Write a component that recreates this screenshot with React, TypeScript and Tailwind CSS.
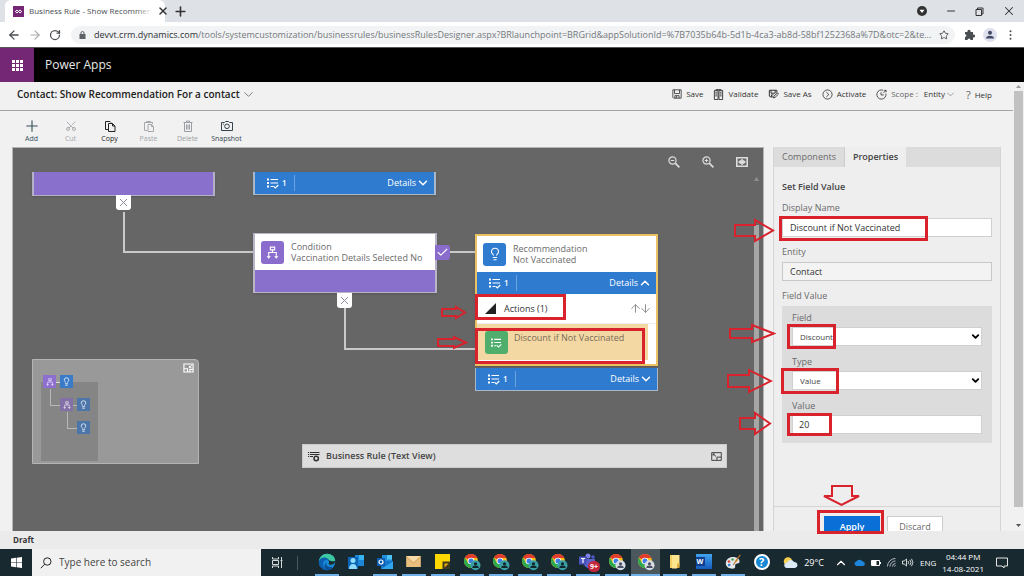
import { ReactNode, useState } from "react";
import {
  ArrowDown,
  ArrowLeft,
  ArrowRight,
  ArrowUp,
  Check,
  ChevronDown,
  ChevronUp,
  Lightbulb,
  Minus,
  Plus,
  RotateCw,
  Scissors,
  Star,
  X,
} from "lucide-react";

interface IconProps {
  className?: string;
}

interface BoxProps {
  className: string;
}

interface ArrowProps {
  className: string;
  w: number;
  h: number;
  head: number;
}

const URL_HOST = "devvt.crm.dynamics.com";
const URL_PATH =
  "/tools/systemcustomization/businessrules/businessRulesDesigner.aspx?BRlaunchpoint=BRGrid&appSolutionId=%7B7035b64b-5d1b-4ca3-ab8d-58bf1252368a%7D&otc=2&te...";

/* ---------- icons ---------- */

const ListCheckIcon = ({ className }: IconProps) => (
  <svg className={className} viewBox="0 0 12 11" fill="none" stroke="currentColor">
    <path d="M0 1.500h2M0 5h2M0 8.500h2" strokeWidth="2" />
    <path d="M3.500 1.500h7.500M3.500 5h7.500M3.500 8.500h2.500" strokeWidth="1.200" />
    <path d="M6.500 8.200l1.800 1.800 3-3" strokeWidth="1.200" />
  </svg>
);

const ConditionIcon = ({ className }: IconProps) => (
  <svg className={className} viewBox="0 0 12 12" fill="none" stroke="currentColor">
    <path d="M4 1h4v2.600H4zM6 3.600V6M2.500 9V6h7v3" />
    <path d="M1 9.500h3L2.500 11.500zM8 9.500h3L9.500 11.500z" fill="currentColor" strokeWidth=".5" />
  </svg>
);

const FloppyIcon = ({ className }: IconProps) => (
  <svg className={className} viewBox="0 0 12 12" fill="none" stroke="currentColor">
    <path d="M1 1h10v10H2l-1-1zM3 1v4.500h6V1M3.500 11V8h5v3M5.500 8.500V11" />
  </svg>
);

const FloppyPenIcon = ({ className }: IconProps) => (
  <svg className={className} viewBox="0 0 13 12" fill="none" stroke="currentColor">
    <path d="M6 9.500H2.500l-1-1v-7h9v3M3.500 1.500v3.500h5V1.500M4 9.500V7h2.500" strokeWidth="1.200" />
    <path d="M6.500 10.800l.6-2.200 4-4 1.400 1.400-4 4z" strokeWidth="1.100" />
  </svg>
);

const ValidateIcon = ({ className }: IconProps) => (
  <svg className={className} viewBox="0 0 12 12" fill="none" stroke="currentColor">
    <path d="M1.500 1.500h4v10h-4zM6.500 1.500h4v10h-4z" />
    <path d="M2.500 3.500h2M2.500 5.500h2M2.500 7.500h2M7.500 3.500h2M7.500 5.500h2M7.500 7.500h2M3 .7h6" />
  </svg>
);

const ActivateIcon = ({ className }: IconProps) => (
  <svg className={className} viewBox="0 0 12 12" fill="none" stroke="currentColor" strokeWidth=".9">
    <circle cx="6" cy="6" r="5" />
    <path d="M4.800 3.500L7.500 6 4.800 8.500" />
  </svg>
);

const ScopeIcon = ({ className }: IconProps) => (
  <svg className={className} viewBox="0 0 12 12" fill="none" stroke="currentColor" strokeWidth=".9">
    <path d="M8 1.500A5 5 0 1 0 10.800 5" />
    <path d="M5.500 3.500v3h3M8 4.200l3-2.700M9 1.500h2v2" />
  </svg>
);

const CopyIcon = ({ className }: IconProps) => (
  <svg className={className} viewBox="0 0 12 12" fill="none" stroke="currentColor">
    <path d="M4 9.500H1.500v-8H6l1 1" />
    <path d="M4.500 3.500h4l2.500 2.500v5.500H4.500zM8.500 3.500V6H11" />
  </svg>
);

const PasteIcon = ({ className }: IconProps) => (
  <svg className={className} viewBox="0 0 12 12" fill="none" stroke="currentColor">
    <path d="M4 10.500H1.500v-8h8V4M3.500 2.500v-1h4v1" />
    <path d="M5 4.500h3.500l2 2v5H5zM8.500 4.500v2h2" />
  </svg>
);

const BinIcon = ({ className }: IconProps) => (
  <svg className={className} viewBox="0 0 12 12" fill="none" stroke="currentColor">
    <path d="M1.500 2.500h9M4.500 2.500v-1.500h3v1.500M2.500 2.500v9h7v-9M4.500 4.500v5M6 4.500v5M7.500 4.500v5" />
  </svg>
);

const SnapshotIcon = ({ className }: IconProps) => (
  <svg className={className} viewBox="0 0 12 12" fill="none" stroke="currentColor">
    <path d="M.5 2.500h3l1-1h3l1 1h3v8H.5z" />
    <circle cx="6" cy="6.300" r="2.300" />
    <path d="M1.800 4.200h1" />
  </svg>
);

const ZoomIcon = ({ className, plus }: IconProps & { plus?: boolean }) => (
  <svg className={className} viewBox="0 0 12 12" fill="none" stroke="currentColor">
    <circle cx="4.500" cy="4.500" r="3.600" strokeWidth="1.200" />
    <path d="M2.800 4.500h3.400" />
    {plus && <path d="M4.500 2.800v3.400" />}
    <path d="M7.200 7.200l4.200 4.200" strokeWidth="1.700" />
  </svg>
);

const FitIcon = ({ className }: IconProps) => (
  <svg className={className} viewBox="0 0 12 10" fill="none" stroke="currentColor">
    <path d="M.8.800h10.400v8.400H.8z" strokeWidth="1.600" />
    <path d="M4 3.200h4v3.600H4z" fill="currentColor" stroke="none" />
    <path d="M6 1.800L4.300 3.500h3.400zM6 8.200L4.300 6.500h3.400zM2 5l2-1.800v3.600zM10 5L8 3.200v3.600z" fill="currentColor" stroke="none" />
  </svg>
);

const CollapseIcon = ({ className }: IconProps) => (
  <svg className={className} viewBox="0 0 12 10" fill="none" stroke="currentColor">
    <path d="M1 .7h10v8.600H1zM1 5.800h4v3.500M7.500 9V6.500H11" strokeWidth="1.200" />
    <path d="M10 1.500L7 4.500M7 2.300v2.200h2.200" />
  </svg>
);

const ExpandIcon = ({ className }: IconProps) => (
  <svg className={className} viewBox="0 0 12 10" fill="none" stroke="currentColor">
    <path d="M.7 .7h10.600v8.600H.7zM6.500 9V5.700H11" />
    <path d="M5.500 5L2.200 2.200M2.200 4V2.200H4" />
  </svg>
);

const TextViewIcon = ({ className }: IconProps) => (
  <svg className={className} viewBox="0 0 12 11" fill="none" stroke="currentColor">
    <path d="M0 1.500h1.200M2 1.500h9.500M0 3.500h1.200M2 3.500h9.500M0 5.500h1.200M2 5.500h3" />
    <circle cx="8.200" cy="7.500" r="2.200" strokeWidth="1.500" />
  </svg>
);

const EdgeLogo = () => (
  <svg className="size-[18px]" viewBox="0 0 18 18">
    <circle cx="9" cy="9" r="8.200" fill="#1789d8" />
    <path d="M.9 8.500C1.500 3.800 5 .8 9.200.8c4.500 0 8 3 8 6.900 0 2.600-2.200 4.100-4.300 4.100-1.600 0-2.600-.6-2.300-1.300.9-1 .9-4.300-2.800-4.600C4.500 5.700 1.800 7 .9 8.500z" fill="#3cc8a0" />
    <path d="M.9 8.500C1.800 5.500 5 4 7.900 4.800c2.200.6 3.500 2.200 3.300 4-.9-2.100-4-2.500-5.500-.3C3.800 11.500 6 16 9.800 17.200 4.500 17.500.7 13.500.9 8.500z" fill="#0c5eae" />
    <path d="M8.200 9.500c-.8 2.800 1.900 5.300 6.300 4.400-1.500 2-3.200 3.200-5.100 3.200-3-1-4-5-1.200-7.600z" fill="#0b4f96" />
    <path d="M10.600 10.500c.9-1 .7-2.500-.4-3.200 3 .2 3.300 2 7 .4 0 2.600-2.200 4.100-4.300 4.100-1.600 0-2.600-.6-2.300-1.300z" fill="#182930" />
  </svg>
);

const PeopleLogo = () => (
  <svg className="size-4" viewBox="0 0 16 16">
    <path d="M7 1h9v11H7z" fill="#1b87d6" />
    <path d="M11 1h5v5h-5z" fill="#37b4f2" />
    <path d="M0 3h10v12H0z" fill="#0c64b4" />
    <circle cx="5" cy="6.500" r="2.500" fill="#8fdcff" />
    <path d="M1 15c0-3 1.500-5 4-5s4 2 4 5z" fill="#8fdcff" />
  </svg>
);

const OutlookLogo = () => (
  <svg className="size-4" viewBox="0 0 16 16">
    <path d="M5 1h10v9H5z" fill="#1f8ede" />
    <path d="M10 1h5v4.500h-5z" fill="#4fc3f5" />
    <path d="M4 7l12 0v8H4z" fill="#1575c8" />
    <path d="M4 15L16 7.500V15z" fill="#30a5ee" />
    <path d="M0 4h8v8H0z" fill="#0b5cb0" />
    <circle cx="4" cy="8" r="2" fill="none" stroke="#fff" strokeWidth="1.200" />
  </svg>
);

const MailLogo = () => (
  <svg className="h-[11px] w-[15px]" viewBox="0 0 16 12">
    <path d="M0 0h16v12H0z" fill="#e9bd7d" />
    <path d="M0 0l8 7 8-7z" fill="#f6d9a6" />
    <path d="M0 .5l8 7 8-7" fill="none" stroke="#c8924f" strokeWidth=".8" />
  </svg>
);

const StickyLogo = () => (
  <svg className="size-[15px]" viewBox="0 0 15 15">
    <path d="M0 0h15v15H0z" fill="#ffd800" />
    <path d="M7.500 7.500H15V15H7.500z" fill="#3d3a22" />
    <path d="M9.500 13.500V9.500h4z" fill="#f0b400" />
  </svg>
);

const ChromeLogo = ({ light }: { light?: boolean }) => (
  <svg className="size-[18px]" viewBox="0 0 18 18">
    <circle cx="8" cy="8" r="7" fill="#fbc116" />
    <path d="M8 8L1.940 4.500A7 7 0 0 1 14.060 4.500L14.300 5H8z" fill="#e33b2e" />
    <path d="M8 8l-3 2L1.940 4.500A7 7 0 0 0 8 15l2.600-4.500z" fill="#2da94f" />
    <circle cx="8" cy="8" r="3.300" fill="#fff" />
    <circle cx="8" cy="8" r="2.500" fill="#3f7de8" />
    <circle cx="12.500" cy="12.300" r="5" fill={light ? "#d9dde4" : "#3a9fa4"} />
    <circle cx="12.500" cy="10.800" r="1.600" fill={light ? "#4a5164" : "#11262d"} />
    <path d="M9.300 15c0-1.700 1.300-2.400 3.200-2.400s3.200.7 3.200 2.400z" fill={light ? "#4a5164" : "#11262d"} />
  </svg>
);

const FolderLogo = () => (
  <svg className="h-[15px] w-3" viewBox="0 0 12 15">
    <path d="M1 1h7v13H1z" fill="#f4cf67" />
    <path d="M3 1h7.500v11H8v2.500H3z" fill="#fde48f" />
    <path d="M8 9.500h2.500V14H8z" fill="#dcae3f" />
  </svg>
);

const PaintLogo = () => (
  <svg className="size-4" viewBox="0 0 16 16">
    <path d="M8 3c4 0 7 2.200 6.500 5-.4 2-3 1.200-4 2.200-1 1 .5 2.500-.8 3.800C8 15.500.8 14.500.8 9.500.8 5.500 4 3 8 3z" fill="#e3e8ec" />
    <circle cx="4" cy="7.500" r="1.300" fill="#d9453b" />
    <circle cx="7.500" cy="5.500" r="1.200" fill="#3f9f4b" />
    <circle cx="4.200" cy="11" r="1.300" fill="#2d7fd6" />
    <circle cx="11.500" cy="6.500" r="1.200" fill="#e9a82d" />
    <path d="M14.800.5L8.500 9.500l-1 2 1.800-1.300L15.700 1.300z" fill="#b87333" />
  </svg>
);

/* ---------- red call-outs ---------- */

const RedBox = ({ className }: BoxProps) => (
  <div className={`pointer-events-none absolute z-20 border-[3px] border-[#d8222c] ${className}`} />
);

// block arrow, pointing to the right
const RedArrow = ({ className, w, h, head }: ArrowProps) => {
  const neck = w - head;
  const top = Math.round(h * 0.27);
  const points = `1,${top} ${neck},${top} ${neck},2 ${w - 2},${h / 2} ${neck},${h - 2} ${neck},${h - top} 1,${h - top}`;
  return (
    <svg className={`pointer-events-none absolute z-20 ${className}`} width={w} height={h} fill="none">
      <polygon points={points} stroke="#d8222c" strokeWidth="2" />
    </svg>
  );
};

/* ---------- browser ---------- */

const BrowserChrome = () => (
  <header className="shrink-0">
    <div className="flex h-[22px] items-center bg-[#dee1e6] pl-[5px]">
      <div className="flex h-full w-40 items-center gap-[5px] rounded-t-md bg-white pr-1 pl-2">
        <svg className="size-[11px] shrink-0" viewBox="0 0 11 11" fill="none">
          <path d="M0 0h11v11H0z" fill="#742774" />
          <path d="M5.500 5.500L4 4 2.300 5.500 4 7l3-3 1.700 1.500L7 7z" stroke="#fff" />
        </svg>
        <div className="relative flex-1 text-[8px] leading-4 whitespace-nowrap text-[#4a4d52]">
          <span>Business Rule - Show Recommen</span>
          <span className="absolute inset-y-0 right-0 w-4 bg-linear-to-r from-transparent to-white" />
        </div>
        <button aria-label="Close tab"><X className="size-3 text-[#333]" strokeWidth={3} /></button>
      </div>
      <button className="ml-2" aria-label="New tab"><Plus className="size-[15px] text-[#333]" strokeWidth={2.500} /></button>
      <div className="ml-auto flex items-center gap-[18px] pr-2 text-[#333]">
        <svg className="size-2.5" viewBox="0 0 10 10">
          <circle cx="5" cy="5" r="5" fill="#333" />
          <path d="M2.500 3.800h5L5 7z" fill="#fff" />
        </svg>
        <button aria-label="Minimize"><Minus className="size-3" strokeWidth={2} /></button>
        <button aria-label="Restore">
          <svg className="size-[9px]" viewBox="0 0 9 9" fill="none" stroke="currentColor">
            <path d="M1 2.500h5.500v6H1zM2.500 2.500V1H8v6H6.500" />
          </svg>
        </button>
        <button aria-label="Close"><X className="size-[14px]" strokeWidth={1.800} /></button>
      </div>
    </div>
    <div className="flex h-[25px] items-center bg-white pl-[7px]">
      <div className="flex items-center gap-[7px] text-[#4a4d52]">
        <button aria-label="Back"><ArrowLeft className="size-[14px]" strokeWidth={2.200} /></button>
        <button aria-label="Forward"><ArrowRight className="size-[14px] text-[#aaa]" strokeWidth={2} /></button>
        <button aria-label="Reload"><RotateCw className="size-3" strokeWidth={2.500} /></button>
      </div>
      <div className="ml-[10px] flex h-[18px] min-w-0 flex-1 items-center rounded-full bg-[#f1f3f4] pr-[6px] pl-2">
        <svg className="h-2 w-[7px] shrink-0" viewBox="0 0 7 8">
          <path d="M.5 3h6v5h-6z" fill="#5f6368" />
          <path d="M2 3.500V2a1.500 1.500 0 0 1 3 0v1.500" fill="none" stroke="#5f6368" />
        </svg>
        <div className="ml-2 min-w-0 flex-1 overflow-hidden text-[9px] leading-4 whitespace-nowrap text-[#75787c]">
          <span className="text-[#303134]">{URL_HOST}</span>{URL_PATH}
        </div>
        <Star className="size-[10px] shrink-0 text-[#4a4d52]" strokeWidth={2.200} />
      </div>
      <div className="flex items-center gap-2 pr-2 pl-[9px]">
        <svg className="size-[11px]" viewBox="0 0 11 11" fill="#4a4d52">
          <path d="M1 3h2.500a1.600 1.600 0 1 1 3 0H9v2.500a1.600 1.600 0 1 1 0 3V11H6.500a1.500 1.500 0 0 0-3 0H1V8a1.400 1.400 0 0 0 0-2.800z" />
        </svg>
        <svg className="size-[14px]" viewBox="0 0 14 14">
          <circle cx="7" cy="7" r="7" fill="#dfe1ee" />
          <circle cx="7" cy="4.800" r="2" fill="#434a66" />
          <path d="M3 10.500c0-2 1.500-2.800 4-2.800s4 .8 4 2.800z" fill="#434a66" />
        </svg>
        <svg className="h-2.5 w-[11px]" viewBox="0 0 11 10" fill="#4a4d52">
          <circle cx="5.500" cy="1.300" r="1" /><circle cx="5.500" cy="5" r="1" /><circle cx="5.500" cy="8.700" r="1" />
        </svg>
      </div>
    </div>
  </header>
);

const AppHeader = () => (
  <div className="flex h-[35px] shrink-0 items-center border-t border-[#555] bg-black">
    <button className="flex h-full w-[34px] items-center justify-center bg-[#742774]" aria-label="App launcher">
      <svg className="size-[11px]" viewBox="0 0 11 11" fill="#fff">
        {[0, 4, 8].map((y) => [0, 4, 8].map((x) => <rect key={`${x}-${y}`} x={x} y={y} width="3" height="3" />))}
      </svg>
    </button>
    <span className="pl-[11px] text-[12px] text-[#e8e8e8]">Power Apps</span>
  </div>
);

/* ---------- command bars ---------- */

const Command = ({ icon, children }: { icon: ReactNode; children: ReactNode }) => (
  <button className="flex items-center gap-1 whitespace-nowrap">
    {icon}
    {children}
  </button>
);

const CommandBar = () => (
  <div className="flex h-[29px] shrink-0 items-center justify-between border-b border-[#a5a5a5] pr-[21px] pb-1 pl-[17px]">
    <button className="flex items-center gap-px text-[10px] font-semibold whitespace-nowrap text-[#222]">
      Contact: Show Recommendation For a contact
      <ChevronDown className="size-[15px] text-[#777]" strokeWidth={1.500} />
    </button>
    <div className="flex items-center gap-2.5 text-[8px] text-[#333]">
      <Command icon={<FloppyIcon className="size-2.5" />}>Save</Command>
      <Command icon={<ValidateIcon className="size-[11px]" />}>Validate</Command>
      <Command icon={<FloppyPenIcon className="h-2.5 w-[11px]" />}>Save As</Command>
      <Command icon={<ActivateIcon className="size-[11px]" />}>Activate</Command>
      <div className="flex items-center gap-1 whitespace-nowrap">
        <ScopeIcon className="size-[11px]" />
        <span className="text-[#666]">Scope :</span>
        <button className="ml-0.5 flex items-center">
          Entity <ChevronDown className="size-[11px] text-[#777]" strokeWidth={1.500} />
        </button>
      </div>
      <button className="flex items-center gap-1 pt-0.5"><span className="text-[11px] leading-3 text-[#666]">?</span>Help</button>
    </div>
  </div>
);

const tools = [
  { name: "Add", color: "text-[#34505c]", icon: <Plus className="size-[18px]" strokeWidth={1.500} /> },
  { name: "Cut", color: "text-[#a4a7ac]", icon: <Scissors className="size-3 -rotate-90" strokeWidth={1.800} /> },
  { name: "Copy", color: "text-[#222]", icon: <CopyIcon className="size-3" /> },
  { name: "Paste", color: "text-[#a4a7ac]", icon: <PasteIcon className="size-3" /> },
  { name: "Delete", color: "text-[#9a9da2]", icon: <BinIcon className="size-3" /> },
  { name: "Snapshot", color: "text-[#34454f]", icon: <SnapshotIcon className="size-3" /> },
];

const Toolbar = () => (
  <div className="flex h-9 shrink-0 pt-[7px] pl-3">
    {tools.map((tool) => (
      <button key={tool.name} className={`flex w-[39px] flex-col items-center text-[7px] leading-3 ${tool.color}`}>
        <span className="flex h-[15px] items-center">{tool.icon}</span>
        {tool.name}
      </button>
    ))}
  </div>
);

/* ---------- designer canvas ---------- */

const DetailsBar = ({ open }: { open?: boolean }) => (
  <div className="flex h-[22px] items-center bg-[#2f7bd0] pr-1 pl-3 text-white">
    <ListCheckIcon className="h-[11px] w-3" />
    <span className="ml-[3px] text-[8px] font-semibold">1</span>
    <span className="ml-[7px] h-4 w-px bg-[#6ba3e0]" />
    <button className="ml-auto flex items-center text-[9px]">
      Details
      {open ? <ChevronUp className="size-[14px]" strokeWidth={2.500} /> : <ChevronDown className="size-[14px]" strokeWidth={2.500} />}
    </button>
  </div>
);

const NodeHead = ({ color, icon, type, name }: { color: string; icon: ReactNode; type: string; name: string }) => (
  <div className="flex h-9 items-center gap-[7px] bg-white pl-[6px]">
    <span className={`flex size-[23px] items-center justify-center rounded-[3px] text-white ${color}`}>{icon}</span>
    <div className="text-[9px] leading-[11px] whitespace-nowrap text-[#6b6b6b]">
      <p>{type}</p>
      <p>{name}</p>
    </div>
  </div>
);

const NoBadge = ({ className }: BoxProps) => (
  <span className={`absolute flex size-[15px] items-center justify-center rounded-b-[3px] bg-white ${className}`}>
    <X className="size-[13px] text-[#8b8b9b]" strokeWidth={1.800} />
  </span>
);

const MapTile = ({ className, rule }: BoxProps & { rule?: boolean }) => (
  <span className={`absolute flex size-[13px] items-center justify-center text-white/80 ${className}`}>
    {rule ? <ConditionIcon className="size-2" /> : <Lightbulb className="size-[9px]" strokeWidth={2.500} />}
  </span>
);

const MiniMap = () => (
  <div className="absolute top-[211px] left-[19px] h-[105px] w-[167px] rounded-tr border border-[#b4b4b4] bg-[#999]">
    <div className="absolute top-[22px] left-2 h-[79px] w-[57px] bg-[#858585]" />
    <div className="absolute top-[22px] left-[23px] h-px w-[6px] bg-[#ddd]" />
    <div className="absolute top-[29px] left-[17px] h-[17px] w-[11px] border-b border-l border-[#b8b8b8]" />
    <div className="absolute top-[45px] left-[40px] h-px w-[6px] bg-[#b8b8b8]" />
    <div className="absolute top-[52px] left-[34px] h-[17px] w-[11px] border-b border-l border-[#b8b8b8]" />
    <MapTile className="top-[15px] left-[10px] bg-[#8d6fcf]" rule />
    <MapTile className="top-[15px] left-[27px] bg-[#3a7ac6]" />
    <MapTile className="top-[38px] left-[27px] bg-[#8370a6]" rule />
    <MapTile className="top-[38px] left-[44px] bg-[#4c76aa]" />
    <MapTile className="top-[61px] left-[44px] bg-[#4c76aa]" />
    <button className="absolute top-[3px] right-1 text-white" aria-label="Collapse map">
      <CollapseIcon className="h-[10px] w-[11px]" />
    </button>
  </div>
);

const Canvas = () => (
  <section className="relative min-w-0 flex-1 overflow-hidden border border-b-0 border-[#b5b5b5] bg-[#666]">
    {/* connectors */}
    <div className="absolute top-16 left-[110px] h-[41px] w-[131px] border-b-2 border-l-2 border-[#c9c9c9]" />
    <div className="absolute top-[103px] left-[436px] h-0.5 w-[27px] bg-[#c9c9c9]" />
    <div className="absolute top-[160px] left-[331px] h-[42px] w-[132px] border-b-2 border-l-2 border-[#c9c9c9]" />

    <div className="absolute top-6 left-[19px] h-6 w-[183px] border-x-2 border-b border-[#b4b0c6] bg-[#8a70cd] shadow-sm" />
    <NoBadge className="top-[47px] left-[103px]" />

    <div className="absolute top-6 left-[240px] w-[183px] border-x-2 border-b border-[#a9b8c9] shadow-sm">
      <DetailsBar />
    </div>

    <div className="absolute top-[85px] left-[240px] w-[184px] border-x-2 border-y border-[#b9b5c6] shadow-sm">
      <NodeHead color="bg-[#8a6ccd]" icon={<ConditionIcon className="size-[13px]" />} type="Condition" name="Vaccination Details Selected No" />
      <div className="h-[22px] bg-[#8a70cd]" />
    </div>
    <span className="absolute top-[97px] left-[422px] flex size-[15px] items-center justify-center rounded-r-[3px] bg-[#8a6ccd]">
      <Check className="size-[13px] text-white" strokeWidth={2} />
    </span>
    <NoBadge className="top-[145px] left-[324px]" />

    <div className="absolute top-[86px] left-[462px] w-[183px] border-2 border-[#ebc263] bg-white shadow-sm">
      <NodeHead color="bg-[#2f7bd0]" icon={<Lightbulb className="size-[14px]" strokeWidth={1.800} />} type="Recommendation" name="Not Vaccinated" />
      <DetailsBar open />
      <div className="flex h-[30px] items-center border-b border-[#eee] pr-1 pl-2 text-[9px] text-[#333]">
        <svg className="size-[11px]" viewBox="0 0 11 11"><path d="M0 11L11 0v11z" fill="#222" /></svg>
        <span className="ml-2">Actions (1)</span>
        <span className="ml-auto flex text-[#8c8c8c]">
          <ArrowUp className="-mr-[3px] size-[13px]" strokeWidth={1.800} />
          <ArrowDown className="size-[13px]" strokeWidth={1.800} />
        </span>
      </div>
      <div className="mr-2 mb-1 flex h-9 gap-[6px] bg-[#f4d8a3] pt-[7px] pl-2 text-[9px] whitespace-nowrap text-[#776c58]">
        <span className="flex size-[23px] items-center justify-center rounded-[3px] bg-[#4fae6b] text-white">
          <ListCheckIcon className="h-[10px] w-[11px]" />
        </span>
        <span className="leading-[14px]">Discount if Not Vaccinated</span>
      </div>
    </div>
    <div className="absolute top-[220px] left-[462px] w-[183px] border-x border-b border-[#a9b8c9]">
      <DetailsBar />
    </div>

    <RedBox className="top-[146px] left-[462px] h-[26px] w-[91px]" />
    <RedBox className="top-[180px] left-[462px] h-9 w-[170px]" />
    <RedArrow className="top-[157px] left-[428px]" w={26} h={15} head={11} />
    <RedArrow className="top-[187px] left-[424px]" w={31} h={15} head={14} />

    <MiniMap />

    <div className="absolute top-[296px] right-9 left-[289px] flex h-6 items-center border border-[#ccc] bg-[#dedede] pr-1 pl-[5px] text-[#333]">
      <TextViewIcon className="h-[11px] w-3" />
      <span className="ml-[6px] text-[9px] font-semibold text-[#444]">Business Rule (Text View)</span>
      <button className="ml-auto" aria-label="Expand text view"><ExpandIcon className="h-[9px] w-[11px]" /></button>
    </div>

    <div className="absolute top-2 right-[15px] flex items-center gap-[22px] text-[#ddd]">
      <button aria-label="Zoom out"><ZoomIcon className="size-3" /></button>
      <button aria-label="Zoom in"><ZoomIcon className="size-3" plus /></button>
      <button aria-label="Fit to canvas"><FitIcon className="h-[10px] w-3" /></button>
    </div>

    <div className="absolute top-[77px] right-1 bottom-0 w-[5px] bg-[#a6a6a6]" />
    <svg className="absolute top-[29px] right-1 h-1 w-[5px]" viewBox="0 0 5 4"><path d="M0 4l2.500-4L5 4z" fill="#8f8f8f" /></svg>
  </section>
);

/* ---------- properties ---------- */

const SelectField = ({ id, label, value }: { id: string; label: string; value: string }) => (
  <div className="h-11">
    <label htmlFor={id} className="block h-[15px] leading-3">{label}</label>
    <div className="relative">
      <select id={id} defaultValue={value} className="h-[19px] w-full appearance-none border border-[#d0d0d0] bg-white pl-[7px] text-[8px] text-[#444]">
        <option>{value}</option>
      </select>
      <ChevronDown className="pointer-events-none absolute top-1 right-px size-[11px] text-black" strokeWidth={4} />
    </div>
  </div>
);

const PropertiesPanel = () => {
  const [displayName, setDisplayName] = useState("Discount if Not Vaccinated");
  const [value, setValue] = useState("20");

  return (
    <aside className="relative ml-[9px] w-[228px] shrink-0">
      <div className="flex h-full flex-col overflow-hidden border-x border-[#d5d5d5] bg-[#eeeeee] text-[9px] text-[#6a6a6a]">
        <div className="flex h-5 shrink-0 bg-[#dcdcdc]">
          <button className="w-[71px] border-r border-[#ccc]">Components</button>
          <button className="w-[61px] bg-[#eeeeee] font-semibold text-[#444]">Properties</button>
        </div>
        <div className="min-h-0 flex-1 px-2">
          <h2 className="pt-[13px] pb-2 leading-[14px] font-semibold text-[#444]">Set Field Value</h2>
          <label htmlFor="display-name" className="block h-4 leading-3">Display Name</label>
          <input id="display-name" value={displayName} onChange={(e) => setDisplayName(e.target.value)}
            className="block h-[19px] w-full border border-[#d0d0d0] bg-white pl-[7px] text-[#333]" />
          <label htmlFor="entity" className="mt-[9px] block h-4 leading-3">Entity</label>
          <input id="entity" value="Contact" readOnly
            className="block h-[19px] w-full border border-[#c8c8c8] bg-[#f3f3f3] pl-[7px] text-[#333]" />
          <p className="mt-[9px] h-4 leading-3">Field Value</p>
          <div className="h-[137px] bg-[#dcdcdc] px-[10px] pt-[6px]">
            <SelectField id="field" label="Field" value="Discount" />
            <SelectField id="type" label="Type" value="Value" />
            <label htmlFor="value" className="block h-[15px] leading-3">Value</label>
            <input id="value" value={value} onChange={(e) => setValue(e.target.value)}
              className="block h-[19px] w-full border border-[#d0d0d0] bg-white pl-[6px] text-[#333]" />
          </div>
        </div>
        <div className="flex h-[25px] shrink-0 gap-[7px] overflow-hidden border-t border-[#d5d5d5] pt-[9px] pl-[50px]">
          <button className="h-[22px] w-14 shrink-0 bg-[#0a70d8] font-semibold text-white">Apply</button>
          <button className="h-[22px] w-14 shrink-0 border border-[#ccc] bg-white">Discard</button>
        </div>
      </div>

      <RedBox className="top-[69px] left-[6px] h-[25px] w-[149px]" />
      <RedBox className="top-[177px] left-[14px] h-[25px] w-[49px]" />
      <RedBox className="top-[221px] left-2 h-[26px] w-[58px]" />
      <RedBox className="top-[266px] left-[14px] h-[23px] w-[45px]" />
      <RedBox className="-bottom-[3px] left-11 h-6 w-[67px]" />
      <RedArrow className="top-[71px] -left-[39px]" w={41} h={25} head={20} />
      <RedArrow className="top-[176px] -left-[44px]" w={47} h={21} head={24} />
      <RedArrow className="top-[221px] -left-[46px]" w={46} h={26} head={24} />
      <RedArrow className="top-[264px] -left-[34px]" w={33} h={25} head={17} />
      <svg className="absolute bottom-6 left-12 z-20" width="41" height="23" fill="none">
        <path d="M11 2h20v10h7L20.500 21 3 12h8z" stroke="#d8222c" strokeWidth="2" />
      </svg>
    </aside>
  );
};

/* ---------- windows taskbar ---------- */

const apps: { name: string; icon: ReactNode; running?: boolean; active?: boolean }[] = [
  { name: "Edge", icon: <EdgeLogo />, running: true },
  { name: "People", icon: <PeopleLogo /> },
  { name: "Outlook", icon: <OutlookLogo />, running: true },
  { name: "Mail", icon: <MailLogo />, running: true },
  { name: "Sticky Notes", icon: <StickyLogo />, running: true },
  { name: "Chrome 1", icon: <ChromeLogo />, running: true },
  { name: "Chrome 2", icon: <ChromeLogo />, running: true },
  { name: "Chrome 3", icon: <ChromeLogo />, running: true },
  { name: "Chrome 4", icon: <ChromeLogo />, running: true },
  {
    name: "Teams",
    running: true,
    icon: (
      <span className="relative flex size-[17px]">
        <svg className="size-[17px]" viewBox="0 0 17 17">
          <circle cx="9" cy="3" r="2.500" fill="#7b83eb" />
          <circle cx="14" cy="4" r="1.800" fill="#5059c9" />
          <path d="M5 6h11v5c0 3-2 4-5.500 4S5 13 5 10z" fill="#5b62c8" />
          <path d="M0 3.500h8v8H0z" fill="#4b53bc" />
          <path d="M2 5.500h4M4 5.500v4.500" stroke="#fff" strokeWidth="1.200" />
        </svg>
        <span className="absolute -right-1 -bottom-0.5 flex h-[11px] w-3 items-center justify-center rounded-full bg-[#c4263c] text-[7px] leading-none font-bold text-white">9+</span>
      </span>
    ),
  },
  { name: "Chrome 5", icon: <ChromeLogo light />, running: true },
  { name: "Chrome 6", icon: <ChromeLogo light />, running: true, active: true },
  { name: "File Explorer", icon: <FolderLogo />, running: true },
  {
    name: "Word",
    running: true,
    icon: (
      <span className="flex h-[15px] w-4 items-center bg-linear-to-b from-[#41a5ee] to-[#185abd]">
        <span className="flex size-[9px] items-center justify-center bg-[#103f91] text-[7px] leading-none font-bold text-white">W</span>
      </span>
    ),
  },
  { name: "Paint", icon: <PaintLogo />, running: true },
  {
    name: "Get Help",
    icon: (
      <span className="flex size-4 items-center justify-center rounded-full border-2 border-white bg-[#1687d4] text-[11px] leading-none font-bold text-white">?</span>
    ),
  },
];

const Taskbar = () => (
  <footer className="flex h-[27px] shrink-0 items-stretch bg-[#182930] text-white">
    <button className="flex w-8 items-center justify-center" aria-label="Start">
      <svg className="size-[11px]" viewBox="0 0 11 11" fill="#fff">
        <path d="M0 1.500L5 .8v4.400H0zM5.600.7L11 0v5.200H5.600zM0 5.800h5v4.400l-5-.7zM5.600 5.800H11V11l-5.400-.7z" />
      </svg>
    </button>
    <label className="flex w-[229px] items-center gap-[7px] bg-[#f1f1f1] pl-2 text-[#333]">
      <svg className="size-3" viewBox="0 0 12 12" fill="none" stroke="#222">
        <circle cx="7.300" cy="4.500" r="3.700" />
        <path d="M4.600 7.300L.8 11.200" />
      </svg>
      <input type="search" aria-label="Search" placeholder="Type here to search" className="min-w-0 flex-1 bg-transparent text-[10px] placeholder:text-[#444]" />
    </label>
    <button className="flex w-8 items-center justify-center" aria-label="Task view">
      <svg className="size-[11px]" viewBox="0 0 11 11" fill="none" stroke="#d5d9db">
        <path d="M.5 0v2h6V0M.5 3.500h6v4h-6zM.5 11V9h6v2M9.500 0v11M8.500 3.500h2" />
      </svg>
    </button>
    <span className="mr-3.5 ml-1 flex items-center"><span className="h-3.5 w-px bg-[#4a575d]" /></span>
    {apps.map((app) => (
      <button key={app.name} aria-label={app.name}
        className={`flex w-[29px] shrink-0 flex-col items-center ${app.active ? "bg-[#4a585e]" : ""}`}>
        <span className="flex flex-1 items-center justify-center">{app.icon}</span>
        <span className={`h-0.5 ${app.active ? "w-full" : "w-6"} ${app.running ? "bg-[#6fb1e8]" : ""}`} />
      </button>
    ))}
    <div className="ml-auto flex items-center gap-1.5 pr-4 text-[8px] whitespace-nowrap">
      <svg className="h-3 w-[15px]" viewBox="0 0 15 12">
        <circle cx="5" cy="4.500" r="4.200" fill="#f8cf4c" />
        <path d="M4 11a2.700 2.700 0 0 1 0-5.400 3.800 3.800 0 0 1 7-.6 3 3 0 0 1 .8 6z" fill="#dcebf7" />
      </svg>
      <span className="text-[9px]">29°C</span>
      <ChevronUp className="ml-1 size-[14px]" strokeWidth={2} />
      <svg className="h-[7px] w-[11px]" viewBox="0 0 11 7">
        <path d="M2.500 7a2.300 2.300 0 0 1-.2-4.500A3.500 3.500 0 0 1 8.500 2.600 2.200 2.200 0 0 1 8.800 7z" fill="#1d86dc" />
      </svg>
      <svg className="h-[6px] w-[10px]" viewBox="0 0 10 6"><path d="M.5.500h8v5h-8z" fill="none" stroke="#fff" /><path d="M1 1h4.500v4H1zM9 2h1v2H9z" fill="#fff" /></svg>
      <svg className="size-[9px]" viewBox="0 0 9 9" fill="none" stroke="#dde" strokeWidth=".8">
        <path d="M.5 8.500a8 8 0 0 1 8-8M3 8.500A5.500 5.500 0 0 1 8.500 3M5.500 8.500a3 3 0 0 1 3-3M7.500 8.500a1 1 0 0 1 1-1" />
      </svg>
      <svg className="h-[9px] w-3" viewBox="0 0 12 9" fill="none" stroke="#fff" strokeWidth=".8">
        <path d="M.5 3v3h1.700L4.500 8V1L2.200 3zM6 3a2.500 2.500 0 0 1 0 3M7.800 1.800a4 4 0 0 1 0 5.400M9.500.8a6 6 0 0 1 0 7.400" />
      </svg>
      <span>ENG</span>
      <span className="flex flex-col items-center leading-3">
        <span>04:44 PM</span>
        <span>14-08-2021</span>
      </span>
      <svg className="ml-1.5 size-3" viewBox="0 0 12 12" fill="none" stroke="#e5e5e5">
        <path d="M.5 1h11v8H8v2L6 9H.5z" />
      </svg>
    </div>
  </footer>
);

const App = () => (
  <div className="flex h-screen flex-col overflow-hidden bg-[#f1f1f1] font-['Open_Sans','Noto_Sans',sans-serif]">
    <BrowserChrome />
    <AppHeader />
    <div className="flex min-h-0 flex-1">
      <main className="flex min-w-0 flex-1 flex-col">
        <CommandBar />
        <Toolbar />
        <div className="flex min-h-0 flex-1 pr-3 pl-3">
          <Canvas />
          <PropertiesPanel />
        </div>
      </main>
      <div className="flex w-[11px] flex-col items-center pt-[3px] pb-1">
        <svg className="h-[3px] w-[5px]" viewBox="0 0 5 3"><path d="M0 3l2.500-3L5 3z" fill="#999" /></svg>
        <div className="mt-[3px] mb-[17px] w-[9px] flex-1 bg-[#c1c1c1]" />
        <svg className="h-[3px] w-[5px]" viewBox="0 0 5 3"><path d="M0 0l2.500 3L5 0z" fill="#555" /></svg>
      </div>
    </div>
    <div className="flex h-[18px] shrink-0 items-center bg-[#ebebeb] pl-[13px] text-[8px] font-bold text-[#333]">Draft</div>
    <Taskbar />
  </div>
);

export default App;
